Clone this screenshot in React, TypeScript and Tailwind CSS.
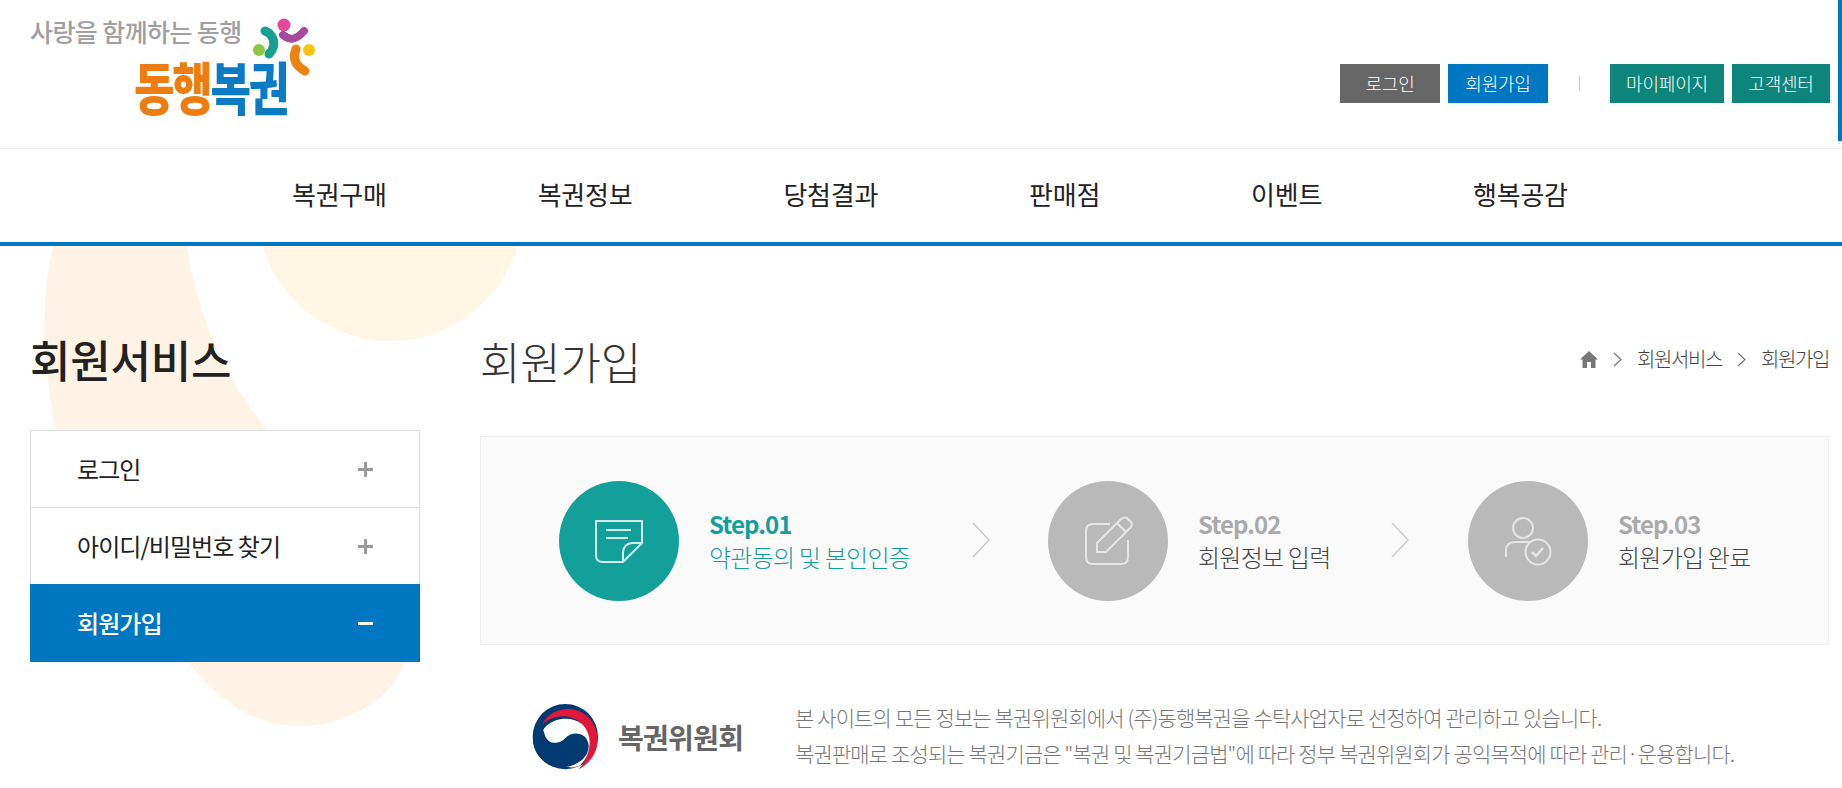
import React from "react";

const font = { fontFamily: '"Noto Sans CJK KR", "Noto Sans", sans-serif' };

function Logo() {
  return (
    <div className="relative h-[148px] w-[330px] shrink-0 pl-[30px] pt-[13px]">
      <div className="text-[25px] leading-[36px] font-medium tracking-[-0.6px] text-[#a0a0a0] whitespace-nowrap">사랑을 함께하는 동행</div>
      <div className="ml-[104px] mt-[1px] flex origin-top-left scale-y-[1.28] text-[44px] leading-[56px] font-black tracking-[-2.2px] whitespace-nowrap">
        <span className="text-[#ee7d11]">동행</span>
        <span className="text-[#0b7cc4]">복권</span>
      </div>
      <svg className="absolute left-0 top-0" width="330" height="90" viewBox="0 0 330 90" fill="none" strokeLinecap="round">
        <circle cx="284" cy="25" r="6.5" fill="#e4489a" />
        <path d="M283 35 C291 42 298 38 304 31" stroke="#a74a9d" strokeWidth="8" />
        <path d="M265 31 C273 34 278 45 269 54" stroke="#17a08f" strokeWidth="9" />
        <circle cx="259" cy="50" r="6" fill="#8dc63f" />
        <circle cx="309" cy="50" r="6" fill="#fdc20f" />
        <path d="M296 49 C292 59 296 66 305 71" stroke="#ee8211" strokeWidth="9" />
      </svg>
    </div>
  );
}

function TopButton({ label, bg, w }: { label: string; bg: string; w: string }) {
  return (
    <a className={`${bg} ${w} flex h-[39px] items-center justify-center text-[18px] tracking-[-0.2px] text-white font-light`}>{label}</a>
  );
}

function Header() {
  return (
    <header className="relative flex h-[149px] justify-between border-b border-[#eeeeee] bg-white">
      <Logo />
      <div className="flex items-start pr-[12px] pt-[64px]">
        <div className="flex gap-[8px]">
          <TopButton label="로그인" bg="bg-[#666666]" w="w-[100px]" />
          <TopButton label="회원가입" bg="bg-[#0077c2]" w="w-[100px]" />
        </div>
        <div className="ml-[31px] mr-[30px] mt-[12px] h-[15px] w-px bg-[#cccccc]" />
        <div className="flex gap-[8px]">
          <TopButton label="마이페이지" bg="bg-[#0e857a]" w="w-[114px]" />
          <TopButton label="고객센터" bg="bg-[#0e857a]" w="w-[98px]" />
        </div>
      </div>
      <div className="absolute right-0 top-0 h-[141px] w-[4px] bg-[#0077c2]" />
    </header>
  );
}

function Nav() {
  const items = ["복권구매", "복권정보", "당첨결과", "판매점", "이벤트", "행복공감"];
  return (
    <nav className="flex h-[97px] items-center gap-[151px] border-b-[4px] border-[#0077c0] bg-white pl-[292px] pb-[4px]">
      {items.map((t) => (
        <a key={t} className="text-[26px] tracking-[-0.25px] text-[#222222]">{t}</a>
      ))}
    </nav>
  );
}

function Plus() {
  return (
    <svg width="15" height="15" viewBox="0 0 15 15" fill="#999999">
      <rect y="6" width="15" height="3" />
      <rect x="6" width="3" height="15" />
    </svg>
  );
}

function Side() {
  return (
    <aside className="w-[390px] shrink-0">
      <h2 className="h-[139px] pt-[36px] text-[44px] leading-[64px] font-medium tracking-[-0.2px] text-[#222222]">회원서비스</h2>
      <ul className="border-x border-t border-[#dddddd] bg-white">
        <li className="flex h-[77px] items-center justify-between border-b border-[#dddddd] pl-[46px] pr-[46px] text-[24px] tracking-[-0.95px] text-[#222222]">
          <span className="pb-[1px]">로그인</span><Plus />
        </li>
        <li className="flex h-[76px] items-center justify-between pl-[46px] pr-[46px] text-[24px] tracking-[-0.95px] text-[#222222]">
          <span>아이디/비밀번호 찾기</span><Plus />
        </li>
      </ul>
      <div className="flex h-[78px] items-center justify-between bg-[#0077c0] pl-[47px] pr-[47px] text-[24px] font-medium tracking-[-0.9px] text-white">
        <span className="pb-[1px]">회원가입</span>
        <svg width="15" height="15" viewBox="0 0 15 15"><rect y="6" width="15" height="3" fill="#fff" /></svg>
      </div>
    </aside>
  );
}

function Chevron({ cls, color }: { cls: string; color: string }) {
  return (
    <svg className={cls} width="18" height="36" viewBox="0 0 18 36" fill="none">
      <path d="M1 1 L17 18 L1 35" stroke={color} strokeWidth="1.5" />
    </svg>
  );
}

function DocIcon() {
  return (
    <svg width="120" height="120" viewBox="0 0 120 120" fill="none" stroke="#d3ece9" strokeWidth="2">
      <path d="M37 40 H83 V62 L64 81 H44 Q37 81 37 74 Z" />
      <path d="M47 49 H72 M47 57 H69" />
      <path d="M83 62 H73 Q64 63 64 72 V81" />
    </svg>
  );
}

function PenIcon() {
  return (
    <svg width="120" height="120" viewBox="0 0 120 120" fill="none" stroke="#e6e6e6" strokeWidth="2">
      <path d="M62 43 H45 Q38 43 38 50 V76 Q38 83 45 83 H73 Q80 83 80 76 V59" />
      <path d="M49 71 V62 L73 38 Q77 35 80 38 L83 41 Q85 44 82 47 L58 71 Z" />
      <path d="M69 42 L78 51" />
    </svg>
  );
}

function UserIcon() {
  return (
    <svg width="120" height="120" viewBox="0 0 120 120" fill="none" stroke="#e6e6e6" strokeWidth="2">
      <circle cx="55" cy="47" r="10" />
      <path d="M38 76 V70 Q38 61 47 61 H62" />
      <circle cx="70" cy="71" r="12.5" />
      <path d="M64 71 L68 75 L75 67" strokeWidth="2.5" />
    </svg>
  );
}

function Step({ icon, n, label, active, w }: { icon: React.ReactNode; n: string; label: string; active?: boolean; w: string }) {
  return (
    <div className={`flex items-center gap-[30px] ${w}`}>
      <div className={`h-[120px] w-[120px] shrink-0 rounded-full ${active ? "bg-[#13a09a]" : "bg-[#b9b9b9]"}`}>{icon}</div>
      <div className="whitespace-nowrap">
        <div className={`text-[24px] leading-[32px] font-bold tracking-[-0.95px] ${active ? "text-[#13a09a]" : "text-[#aaaaaa]"}`}>{n}</div>
        <div className={`text-[24px] leading-[33px] font-light tracking-[-0.75px] ${active ? "text-[#13a09a]" : "text-[#444444]"}`}>{label}</div>
      </div>
    </div>
  );
}

function Emblem() {
  return (
    <svg width="68" height="66" viewBox="0 0 204 198">
      <circle cx="100" cy="98" r="98" fill="#003a70" />
      <path d="M30 62 C55 10 130 -2 172 42 C212 90 205 160 140 196 C180 150 182 95 150 60 C118 28 65 30 30 62 Z" fill="#e2173a" />
      <path d="M30 92 C30 58 100 24 150 60 C184 94 178 150 146 182 C120 200 70 192 40 120 Z" fill="#ffffff" />
      <path d="M38 92 C48 124 84 122 100 102 C118 80 166 82 170 124 C172 164 124 192 84 190 C40 186 -4 150 4 90 C8 60 32 60 38 92 Z" fill="#003a70" />
    </svg>
  );
}

function Main() {
  return (
    <main className="min-w-0 flex-1">
      <div className="flex h-[145px] items-start justify-between">
        <h3 className="pt-[38px] text-[44px] leading-[64px] font-light tracking-[-0.2px] text-[#333333]">회원가입</h3>
        <div className="flex items-center pt-[55px] text-[20px] leading-[26px] font-light tracking-[-1.4px] text-[#444444]">
          <svg width="18" height="17" viewBox="0 0 18 17" fill="#777777">
            <path d="M9 0 L18 8.5 H15.5 V17 H11 V11 H7 V17 H2.5 V8.5 H0 Z" />
          </svg>
          <svg className="mx-[15px]" width="9" height="15" viewBox="0 0 9 15" fill="none"><path d="M1 1 L8 7.5 L1 14" stroke="#777777" strokeWidth="1.2" /></svg>
          <span>회원서비스</span>
          <svg className="mx-[15px]" width="9" height="15" viewBox="0 0 9 15" fill="none"><path d="M1 1 L8 7.5 L1 14" stroke="#777777" strokeWidth="1.2" /></svg>
          <span>회원가입</span>
        </div>
      </div>
      <div className="flex h-[209px] items-center border border-[#eeeeee] bg-[#fafafa] pl-[78px]">
        <Step w="w-[413px]" active icon={<DocIcon />} n="Step.01" label="약관동의 및 본인인증" />
        <Chevron cls="shrink-0 mr-[58px] -mt-[1px]" color="#cccccc" />
        <Step w="w-[343px]" icon={<PenIcon />} n="Step.02" label="회원정보 입력" />
        <Chevron cls="shrink-0 mr-[59px] -mt-[1px]" color="#cccccc" />
        <Step w="w-[345px]" icon={<UserIcon />} n="Step.03" label="회원가입 완료" />
      </div>
      <div className="mt-[42px] flex items-start pl-[52px] pt-[17px]">
        <div className="flex w-[263px] shrink-0 items-center gap-[18px] text-[28px] font-bold tracking-[-0.7px] text-[#666666]">
          <Emblem />
          <span className="pb-[1px]">복권위원회</span>
        </div>
        <div className="-mt-[5px] text-[21px] leading-[36px] font-light tracking-[-0.87px] text-[#777777] whitespace-nowrap">
          <p>본 사이트의 모든 정보는 복권위원회에서 (주)동행복권을 수탁사업자로 선정하여 관리하고 있습니다.</p>
          <p>복권판매로 조성되는 복권기금은 "복권 및 복권기금법"에 따라 정부 복권위원회가 공익목적에 따라 관리·운용합니다.</p>
        </div>
      </div>
    </main>
  );
}

export default function App() {
  return (
    <div style={font} className="relative h-[788px] w-full overflow-hidden bg-white">
      <Header />
      <Nav />
      <svg className="absolute left-0 top-[246px]" width="540" height="500" viewBox="0 0 540 500">
        <circle cx="390" cy="-38" r="133" fill="#fff7e3" />
        <path d="M53 0 C42 50 40 110 56 184 L187 415 C215 450 250 480 300 480 C350 480 395 450 405 415 L267 184 C240 150 200 90 187 0 Z" fill="#fff3e6" />
      </svg>
      <div className="relative flex gap-[60px] pl-[30px] pr-[13px] pt-[45px]">
        <Side />
        <Main />
      </div>
    </div>
  );
}
